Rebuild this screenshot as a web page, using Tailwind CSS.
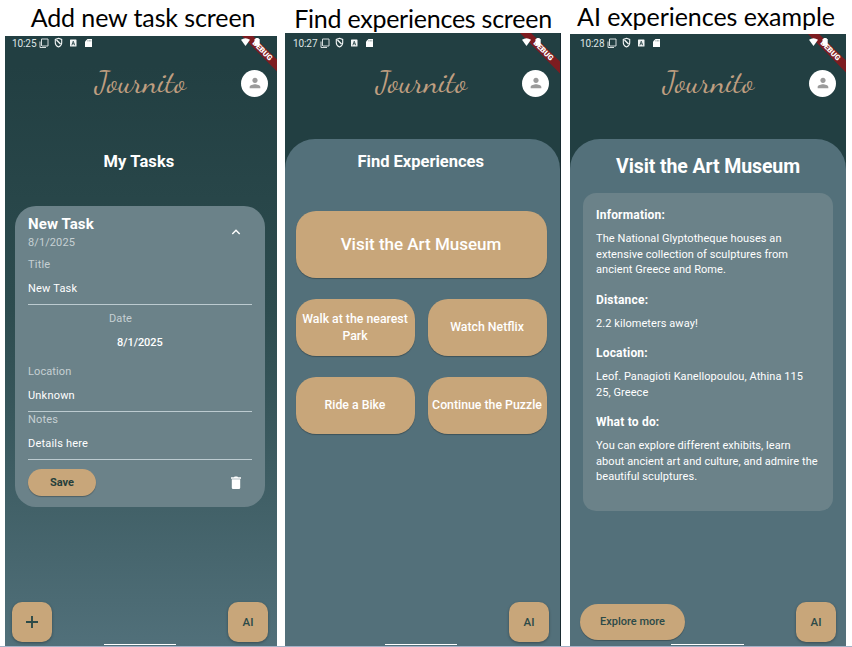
<!DOCTYPE html>
<html lang="en">
<head>
<meta charset="utf-8">
<title>Journito screens</title>
<script src="https://cdn.jsdelivr.net/npm/@tailwindcss/browser@4"></script>
</head>
<body class="bg-white">
<svg class="hidden">
  <symbol id="status" viewBox="0 0 56 12">
    <path d="M3.500 2h6.500v7H4M3.500 2v7M2 4.500v6h6" fill="none" stroke="#d5dddd" stroke-width="1"/>
    <path d="M20.500 1.300l3.200 1.200v3.200c0 2-1.400 3.500-3.200 4.200-1.800-.7-3.200-2.200-3.200-4.200V2.500z" fill="none" stroke="#f2f5f5" stroke-width="1.100"/>
    <path d="M18.500 3l4 4" stroke="#f2f5f5" stroke-width="1.400"/>
    <rect x="32" y="2.500" width="6.500" height="7" rx=".6" fill="#f2f5f5"/>
    <path d="M33.800 8.300l1.450-4.100 1.450 4.100M34.300 6.800h1.900" fill="none" stroke="#223f42" stroke-width=".8"/>
    <path d="M49.500 2h4.500v8h-7V4.500z" fill="#fff"/>
    <path d="M49.900 3v1.500M51.400 3v1.500M52.800 3v1.500" stroke="#223f42" stroke-width=".4"/>
  </symbol>
  <symbol id="corner" viewBox="0 0 40 40" overflow="visible">
    <path d="M-1-4H10L40 25.500V37.500z" fill="#7d1c20"/>
    <text x="23.500" y="14.500" transform="rotate(45 23.500 14.500)" text-anchor="middle" dominant-baseline="central" font-family="Roboto" font-weight="900" font-size="7.500" fill="#fff" textLength="25" lengthAdjust="spacingAndGlyphs">DEBUG</text>
    <path d="M2 3.700Q6.500.6 11 3.700L6.500 10z" fill="#fff"/>
    <path d="M15.500 3h1V2h3.200v1h1v5.500l-1.700 1.300h-3.500z" fill="#fff"/>
  </symbol>
  <symbol id="person" viewBox="0 0 24 24">
    <path d="M12 12c2.210 0 4-1.790 4-4s-1.790-4-4-4-4 1.790-4 4 1.790 4 4 4zm0 2c-2.670 0-8 1.340-8 4v2h16v-2c0-2.660-5.330-4-8-4z" fill="#9b9b9b"/>
  </symbol>
  <symbol id="logo" viewBox="0 0 96 34" overflow="visible">
    <text x="3" y="26" font-family="'Dancing Script','Liberation Serif',cursive" font-size="29.500" fill="#bf9e80" textLength="91" lengthAdjust="spacingAndGlyphs">Journito</text>
  </symbol>
</svg>

<main class="flex h-[647px] w-[852px] items-end gap-2 overflow-hidden border-b border-[#a3b1c6] pl-[5px] font-[Roboto,sans-serif] text-white">

  <figure class="flex h-full w-[272px] shrink-0 flex-col">
    <figcaption class="flex h-[36px] items-center justify-center whitespace-nowrap pl-1 font-[Lato,sans-serif] text-[25px] tracking-[-.1px] text-black">Add new task screen</figcaption>
    <div class="relative flex h-[610px] flex-col overflow-hidden bg-linear-to-b from-[#223f42] from-5% via-[#2d4c4f] via-45% to-[#51707a]">
      <svg class="absolute top-0 -right-[2px] size-10 overflow-visible"><use href="#corner"/></svg>
      <div class="flex h-[14px] items-center pl-[7px]">
        <span class="w-[26px] text-[10px] tracking-[-.1px] text-[#dfe6e6]">10:25</span>
        <svg class="h-3 w-14"><use href="#status"/></svg>
      </div>
      <div class="mt-[16px] flex h-[34px] items-center">
        <svg class="ml-[87px] h-[34px] w-24 overflow-visible"><use href="#logo"/></svg>
        <div class="ml-auto mr-[9px] flex size-[27px] items-center justify-center rounded-full bg-white"><svg class="size-4"><use href="#person"/></svg></div>
      </div>
      <h2 class="mt-[52px] h-5 pr-1 text-center text-[16.500px] leading-5 font-bold tracking-[.1px]">My Tasks</h2>
      <section class="mx-[10px] mt-[34px] h-[301px] w-[250px] rounded-[21px] bg-[#6b8289] px-[13px] pt-[9px]">
        <div class="flex justify-between">
          <div>
            <h3 class="h-[18px] text-[15px] leading-[18px] font-bold tracking-[.1px]">New Task</h3>
            <p class="h-[19px] text-[11px] leading-[19px] tracking-[.1px] text-[#c6d0d3]">8/1/2025</p>
          </div>
          <svg class="mt-[11px] mr-[10px] size-3" viewBox="0 0 12 12"><path d="M2.300 8L6 4.300 9.700 8" fill="none" stroke="#fff" stroke-width="1.400"/></svg>
        </div>
        <p class="mt-[3px] h-5 text-[11px] leading-5 tracking-[.2px] text-[#c6d0d3]">Title</p>
        <p class="mt-[3px] h-[26px] w-[224px] text-[11px] leading-[22px] tracking-[.2px]">New Task</p>
        <div class="h-px w-[224px] bg-[#bccbd0]"></div>
        <p class="mt-[3px] h-5 pl-[81px] text-[11px] leading-[22px] tracking-[.1px] text-[#c6d0d3]">Date</p>
        <p class="mt-[4px] h-5 pl-[89px] text-[11px] leading-[22px] font-medium tracking-[-.05px]">8/1/2025</p>
        <p class="mt-[9px] h-5 text-[11px] leading-[22px] tracking-[.1px] text-[#c6d0d3]">Location</p>
        <p class="mt-[4px] h-[26px] text-[11px] leading-[22px] tracking-[.2px]">Unknown</p>
        <div class="h-px w-[224px] bg-[#bccbd0]"></div>
        <p class="h-4 text-[11px] leading-4 tracking-[.2px] text-[#c6d0d3]">Notes</p>
        <p class="mt-[5px] h-[26px] text-[11px] leading-[22px] tracking-[.2px]">Details here</p>
        <div class="h-px w-[224px] bg-[#bccbd0]"></div>
        <div class="mt-[9px] flex items-center justify-between">
          <button class="h-[27px] w-[68px] rounded-full bg-[#c8a67a] pt-px text-[11px] font-bold text-[#263e3b] shadow-[0_1px_1px_#0004]">Save</button>
          <svg class="mr-[10px] h-[14px] w-3" viewBox="0 0 12 14"><path d="M1 1.200h3L4.700.5h2.600l.7.700h3v1.500H1zM1.800 3.200h8.400v8.500q0 1.300-1.300 1.300H3.100q-1.300 0-1.300-1.300z" fill="#fff"/></svg>
        </div>
      </section>
      <div class="mt-auto mb-1 flex justify-between pr-[9px] pl-[7px]">
        <button class="flex size-10 items-center justify-center rounded-[10px] bg-[#c8a67a] shadow-[0_1px_3px_#0005]"><svg class="size-3" viewBox="0 0 12 12"><path d="M6 0v12M0 6h12" stroke="#2c4a48" stroke-width="1.900"/></svg></button>
        <button class="size-10 rounded-[10px] bg-[#c8a67a] pt-px text-[11.500px] font-medium text-[#2c4a48] shadow-[0_1px_3px_#0005]">AI</button>
      </div>
      <div class="absolute bottom-px left-[99px] h-px w-[72px] bg-white"></div>
    </div>
  </figure>

  <figure class="flex h-full w-[276px] shrink-0 flex-col">
    <figcaption class="flex h-[33px] items-center justify-center whitespace-nowrap pt-1 font-[Lato,sans-serif] text-[25px] tracking-[-.24px] text-black">Find experiences screen</figcaption>
    <div class="relative flex h-[613px] flex-col overflow-hidden border-r border-[#182a30] bg-[#223f42]">
      <svg class="absolute top-[3px] right-0 size-10 overflow-visible"><use href="#corner"/></svg>
      <div class="mt-[3px] flex h-[14px] items-center pl-[8px]">
        <span class="w-[26px] text-[10px] tracking-[-.1px] text-[#dfe6e6]">10:27</span>
        <svg class="h-3 w-14"><use href="#status"/></svg>
      </div>
      <div class="mt-[16px] flex h-[34px] items-center">
        <svg class="ml-[88px] h-[34px] w-24 overflow-visible"><use href="#logo"/></svg>
        <div class="ml-auto mr-[11px] flex size-[27px] items-center justify-center rounded-full bg-white"><svg class="size-4"><use href="#person"/></svg></div>
      </div>
      <section class="mt-[39px] flex flex-1 flex-col rounded-t-[30px] bg-[#53707a] pr-[11px] pl-[10.500px] pt-[13px]">
        <h2 class="h-5 pr-[3px] text-center text-[16.500px] leading-5 font-bold">Find Experiences</h2>
        <button class="mt-[39px] h-[67px] w-[251px] rounded-[20px] bg-[#c8a67a] text-[17px] font-medium shadow-[0_1px_1px_#0004]">Visit the Art Museum</button>
        <div class="mt-[21px] grid w-[251px] grid-cols-2 gap-x-[13px] gap-y-[21px] text-[12.300px] leading-[17px] font-medium">
          <button class="h-[57px] rounded-[20px] bg-[#c8a67a] shadow-[0_1px_1px_#0004]">Walk at the nearest<br>Park</button>
          <button class="h-[57px] rounded-[20px] bg-[#c8a67a] shadow-[0_1px_1px_#0004]">Watch Netflix</button>
          <button class="h-[57px] rounded-[20px] bg-[#c8a67a] shadow-[0_1px_1px_#0004]">Ride a Bike</button>
          <button class="h-[57px] whitespace-nowrap rounded-[20px] bg-[#c8a67a] shadow-[0_1px_1px_#0004]">Continue the Puzzle</button>
        </div>
        <button class="mt-auto mb-1 ml-auto size-10 rounded-[10px] bg-[#c8a67a] pt-px text-[11.500px] font-medium text-[#2c4a48] shadow-[0_1px_3px_#0005]">AI</button>
      </section>
      <div class="absolute bottom-px left-[100px] h-px w-[72px] bg-white"></div>
    </div>
  </figure>

  <figure class="ml-px flex h-full w-[276px] shrink-0 flex-col">
    <figcaption class="flex h-[34px] items-center justify-center whitespace-nowrap pr-1 font-[Lato,sans-serif] text-[25px] tracking-[-.05px] text-black">AI experiences example</figcaption>
    <div class="relative flex h-[612px] flex-col overflow-hidden bg-[#223f42]">
      <svg class="absolute top-[2px] -right-px size-10 overflow-visible"><use href="#corner"/></svg>
      <div class="mt-[2px] flex h-[14px] items-center pl-[10px]">
        <span class="w-[26px] text-[10px] tracking-[-.1px] text-[#dfe6e6]">10:28</span>
        <svg class="h-3 w-14"><use href="#status"/></svg>
      </div>
      <div class="mt-[16px] flex h-[34px] items-center">
        <svg class="ml-[90px] h-[34px] w-24 overflow-visible"><use href="#logo"/></svg>
        <div class="ml-auto mr-[10px] flex size-[27px] items-center justify-center rounded-full bg-white"><svg class="size-4"><use href="#person"/></svg></div>
      </div>
      <section class="mt-[39px] flex flex-1 flex-col rounded-t-[30px] bg-[#53707a] pt-4">
        <h2 class="h-6 text-center text-[19.500px] leading-6 font-bold tracking-[-.1px]">Visit the Art Museum</h2>
        <article class="mt-[14px] ml-[13px] h-[318px] w-[250px] rounded-[13px] bg-[#6b8289] px-[13px] pt-[14px] text-[11px] leading-[15.500px] tracking-[.07px] whitespace-nowrap">
          <h3 class="h-4 text-[12px] leading-4 font-bold tracking-[.2px]">Information:</h3>
          <p class="mt-[8px] h-[47px]">The National Glyptotheque houses an<br>extensive collection of sculptures from<br>ancient Greece and Rome.</p>
          <h3 class="mt-[14px] h-4 text-[12px] leading-4 font-bold tracking-[.2px]">Distance:</h3>
          <p class="mt-[8px] h-[16px]">2.2 kilometers away!</p>
          <h3 class="mt-[13px] h-4 text-[12px] leading-4 font-bold tracking-[.2px]">Location:</h3>
          <p class="mt-[8px] h-[31px]">Leof. Panagioti Kanellopoulou, Athina 115<br>25, Greece</p>
          <h3 class="mt-[14px] h-4 text-[12px] leading-4 font-bold tracking-[.2px]">What to do:</h3>
          <p class="mt-[8px]">You can explore different exhibits, learn<br>about ancient art and culture, and admire the<br>beautiful sculptures.</p>
        </article>
        <div class="mt-auto mb-1 flex items-center justify-between pr-[10px] pl-[10px]">
          <button class="h-9 w-[105px] rounded-full bg-[#c8a67a] pt-px text-[11px] font-medium text-[#2c4a48] shadow-[0_1px_1px_#0004]">Explore more</button>
          <button class="size-10 rounded-[10px] bg-[#c8a67a] pt-px text-[11.500px] font-medium text-[#2c4a48] shadow-[0_1px_3px_#0005]">AI</button>
        </div>
      </section>
      <div class="absolute bottom-px left-[101px] h-px w-[73px] bg-white"></div>
    </div>
  </figure>
</main>
</body>
</html>
